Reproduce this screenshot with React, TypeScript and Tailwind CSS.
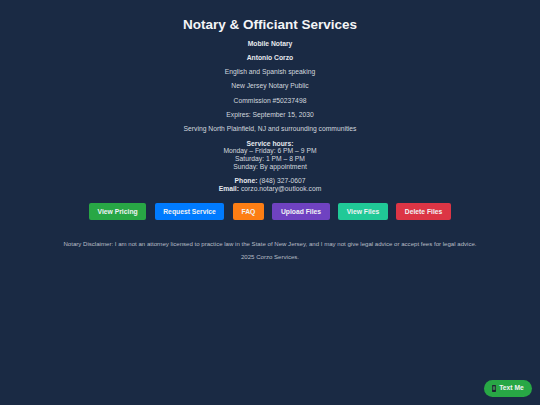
const buttons = [
  { label: 'View Pricing', color: 'bg-[#28a745]' },
  { label: 'Request Service', color: 'bg-[#007bff]' },
  { label: 'FAQ', color: 'bg-[#fd7e14]' },
  { label: 'Upload Files', color: 'bg-[#6f42c1]' },
  { label: 'View Files', color: 'bg-[#20c997]' },
  { label: 'Delete Files', color: 'bg-[#dc3545]' },
];

export default function App() {
  return (
    <div className="relative h-[405px] overflow-hidden bg-[#1a2a44] text-center text-[6.75px] leading-[7.67px] text-[#d3d8df] font-['Liberation_Sans',Arial,sans-serif]">
      <div className="flex flex-col items-center pt-[17px]">
        <h1 className="text-[13.5px] leading-[16px] font-bold text-[#f4f5f7]">Notary &amp; Officiant Services</h1>
        <div className="mt-[6.5px] flex flex-col gap-[6.66px]">
          <p className="font-bold text-[#e6e9ee]">Mobile Notary</p>
          <p className="font-bold text-[#e6e9ee]">Antonio Corzo</p>
          <p>English and Spanish speaking</p>
          <p>New Jersey Notary Public</p>
          <p>Commission #50237498</p>
          <p>Expires: September 15, 2030</p>
          <p>Serving North Plainfield, NJ and surrounding communities</p>
          <p>
            <strong className="text-[#e6e9ee]">Service hours:</strong>
            <br />
            Monday – Friday: 6 PM – 9 PM
            <br />
            Saturday: 1 PM – 8 PM
            <br />
            Sunday: By appointment
          </p>
          <p>
            <strong className="text-[#e6e9ee]">Phone:</strong> (848) 327-0607
            <br />
            <strong className="text-[#e6e9ee]">Email:</strong> corzo.notary@outlook.com
          </p>
        </div>
        <div className="mt-[10.5px] flex justify-center gap-[8.44px]">
          {buttons.map((b) => (
            <button
              key={b.label}
              className={`${b.color} h-[17.5px] rounded-[2px] px-[8.6px] text-[6.75px] font-bold text-[#f1f3f5]`}
            >
              {b.label}
            </button>
          ))}
        </div>
        <p className="mt-[19.5px] text-[6.08px] leading-[7px] text-[#b9bec6]">
          Notary Disclaimer: I am not an attorney licensed to practice law in the State of New Jersey, and I may not give legal advice or accept fees for legal advice.
        </p>
        <p className="mt-[6px] text-[6.08px] leading-[7px] text-[#b9bec6]">2025 Corzo Services.</p>
      </div>
      <button className="absolute bottom-[8.5px] right-[8px] flex h-[16.5px] w-[48px] items-center justify-center gap-[3px] rounded-full bg-[#28a745] text-[6.75px] font-bold text-[#f1f3f5]">
        <svg width="4" height="7" viewBox="0 0 4 7" aria-hidden="true">
          <rect width="4" height="7" rx="0.7" fill="#1c2430" />
          <rect x="0.7" y="1.3" width="2.6" height="3.6" fill="#3f7f52" />
        </svg>
        Text Me
      </button>
    </div>
  );
}
